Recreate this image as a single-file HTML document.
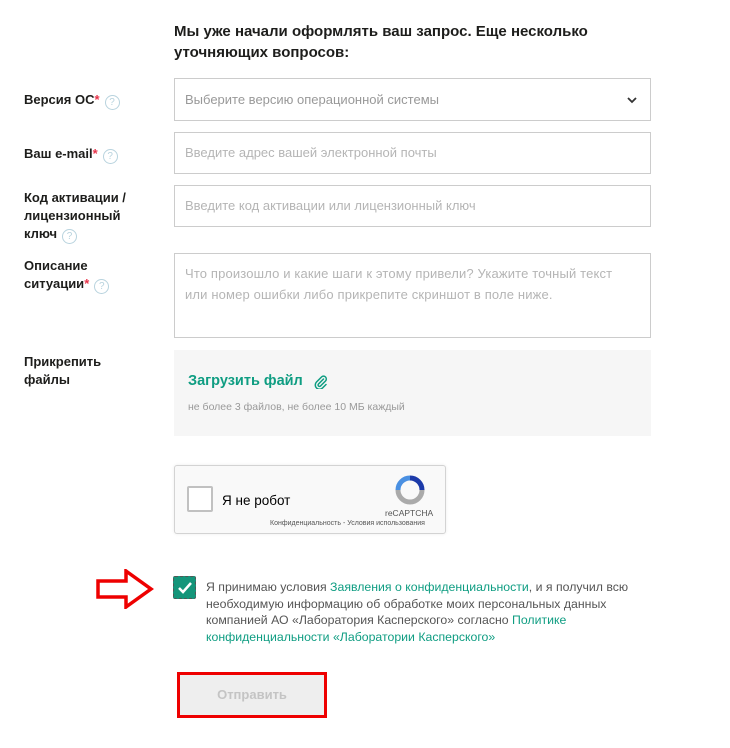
<!DOCTYPE html>
<html><head><meta charset="utf-8"><style>
body{margin:0;background:#fff;font-family:"Liberation Sans","Noto Sans CJK SC",sans-serif;width:730px;height:748px;position:relative;overflow:hidden;color:#1d1d1b}
.a{position:absolute}
h1{position:absolute;left:174px;top:21px;margin:0;font-size:15px;line-height:21px;font-weight:bold;width:460px}
.lbl{position:absolute;left:24px;font-size:13px;font-weight:bold;line-height:18px}
.lbl i{color:#e8334a;font-style:normal}
.q{display:inline-block;width:13px;height:13px;border:1.5px solid #b8d3de;border-radius:50%;color:#b8d3de;font-size:10px;line-height:13px;text-align:center;font-weight:normal;vertical-align:-1px;margin-left:5px}
.in{position:absolute;left:174px;width:477px;border:1px solid #ccc;color:#b5b5b5;font-size:13px;box-sizing:border-box;padding-left:10px}
a{color:#0f9d82;text-decoration:none}
</style></head><body>
<h1>Мы уже начали оформлять ваш запрос. Еще несколько уточняющих вопросов:</h1>

<div class="lbl" style="top:91px">Версия ОС<i>*</i><span class="q">?</span></div>
<div class="in" style="top:78px;height:43px;line-height:41px;color:#999">Выберите версию операционной системы</div>
<svg class="a" style="left:627px;top:97px" width="10" height="7"><path d="M1 1L5 5L9 1" stroke="#333" stroke-width="1.8" fill="none"/></svg>

<div class="lbl" style="top:145px">Ваш e-mail<i>*</i><span class="q">?</span></div>
<div class="in" style="top:132px;height:42px;line-height:40px">Введите адрес вашей электронной почты</div>

<div class="lbl" style="top:189px">Код активации /<br>лицензионный<br>ключ<span class="q">?</span></div>
<div class="in" style="top:185px;height:42px;line-height:40px">Введите код активации или лицензионный ключ</div>

<div class="lbl" style="top:257px">Описание<br>ситуации<i>*</i><span class="q">?</span></div>
<div class="in" style="top:253px;height:85px;padding-top:9px;line-height:21px;padding-right:14px;letter-spacing:0.15px">Что произошло и какие шаги к этому привели? Укажите точный текст или номер ошибки либо прикрепите скриншот в поле ниже.</div>

<div class="lbl" style="top:353px">Прикрепить<br>файлы</div>
<div class="a" style="left:174px;top:350px;width:477px;height:86px;background:#f6f6f6">
<div class="a" style="left:14px;top:23px;font-size:14.5px;font-weight:bold;color:#0f9d82">Загрузить файл</div>
<svg class="a" style="left:140px;top:25px" width="14" height="14" viewBox="0 0 14 14"><path d="M9.5 4L4.5 9A1.4 1.4 0 0 0 6.5 11L11.5 6A2.8 2.8 0 0 0 7.5 2L2.5 7A4.2 4.2 0 0 0 8.5 13L12 9.5" stroke="#0f9d82" stroke-width="1.5" fill="none" stroke-linecap="round"/></svg>
<div class="a" style="left:14px;top:51px;font-size:10.5px;color:#999">не более 3 файлов, не более 10 МБ каждый</div>
</div>

<div class="a" style="left:174px;top:465px;width:270px;height:67px;background:#f9f9f9;border:1px solid #d3d3d3;border-radius:3px;box-shadow:0 0 3px rgba(0,0,0,.08)">
<div class="a" style="left:12px;top:20px;width:22px;height:22px;background:#fff;border:2px solid #c1c1c1;border-radius:2px"></div>
<div class="a" style="left:47px;top:27px;font-size:13.5px;color:#000">Я не робот</div>
<svg class="a" style="left:220px;top:9px" width="30" height="30"><path d="M15 3A12 12 0 0 1 27 15" stroke="#1c3aa9" stroke-width="5" fill="none"/><path d="M3 15A12 12 0 0 1 15 3" stroke="#4a90e2" stroke-width="5" fill="none"/><path d="M27 15A12 12 0 0 1 3 15" stroke="#aaa" stroke-width="5" fill="none"/></svg>
<div class="a" style="left:210px;top:42px;font-size:8.5px;color:#555">reCAPTCHA</div>
<div class="a" style="left:95px;top:54px;font-size:7px;color:#555;white-space:nowrap">Конфиденциальность - Условия использования</div>
</div>

<svg class="a" style="left:96px;top:569px" width="58" height="40"><path d="M2 12H30V2L55 20L30 38V28H2Z" fill="#fff" stroke="#e00" stroke-width="3.5"/></svg>
<div class="a" style="left:173px;top:576px;width:23px;height:23px;background:#14957a;border:1px dashed #555;box-sizing:border-box;border-radius:2px"></div>
<svg class="a" style="left:177px;top:581px" width="16" height="13"><path d="M2 7L6 11L14 2" stroke="#fff" stroke-width="2.5" fill="none"/></svg>
<div class="a" style="left:206px;top:579px;width:430px;font-size:12.3px;line-height:16.5px;color:#555">Я принимаю условия <a>Заявления о конфиденциальности</a>, и я получил всю необходимую информацию об обработке моих персональных данных компанией АО «Лаборатория Касперского» согласно <a>Политике конфиденциальности «Лаборатории Касперского»</a></div>

<div class="a" style="left:177px;top:672px;width:150px;height:46px;border:3.5px solid #e00;box-sizing:border-box;background:#eee;text-align:center;line-height:39px;font-size:13px;font-weight:bold;color:#c4c4c4">Отправить</div>
</body></html>
